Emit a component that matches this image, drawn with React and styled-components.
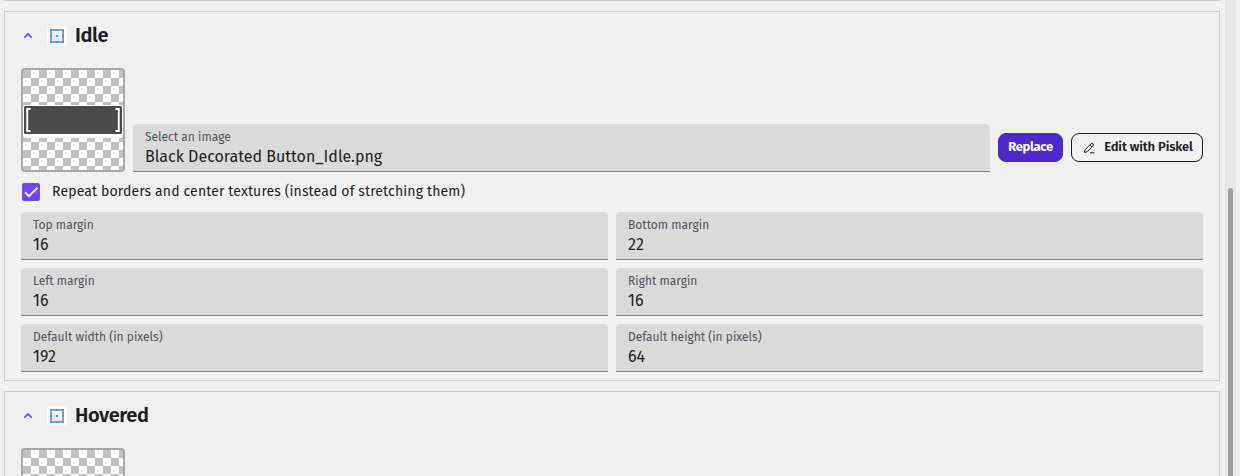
import React from "react";
import styled, { createGlobalStyle } from "styled-components";

const GlobalStyle = createGlobalStyle`
  * {
    box-sizing: border-box;
  }

  body {
    margin: 0;
    background: #f0f0f0;
    color: #1d1d26;
    font-family: "Fira Sans", "Noto Sans CJK SC", "Noto Sans", sans-serif;
    overflow: hidden;
  }
`;

const Page = styled.div`
  display: flex;
  height: 476px;
  overflow: hidden;
`;

const PanelList = styled.div`
  display: flex;
  flex-direction: column;
  flex: none;
  gap: 10px;
  width: 1220px;
  padding-left: 4px;
`;

const PanelEnd = styled.div`
  flex: none;
  height: 1px;
  background: #cccccc;
`;

const Panel = styled.section`
  flex: none;
  height: 370px;
  padding: 0 16px;
  border: 1px solid #cccccc;
`;

const PanelHeader = styled.header`
  display: flex;
  align-items: center;
  height: 48px;
`;

const Chevron = styled.svg`
  width: 10px;
  height: 8px;
  margin: 0 19px 1px 2px;
  fill: none;
  stroke: #7046ec;
  stroke-width: 1.7;
`;

const PatchIcon = styled.svg`
  width: 20px;
  height: 20px;
  margin: 0 8px 0 -5px;
`;

const PanelTitle = styled.h2`
  margin: 0 0 2px;
  font-size: 20px;
  line-height: 24px;
  font-weight: 600;
  letter-spacing: -0.4px;
`;

const ImageRow = styled.div`
  display: flex;
  align-items: flex-end;
  gap: 8px;
  margin-top: 8px;
`;

const Preview = styled.div`
  display: flex;
  flex: none;
  align-items: center;
  width: 104px;
  height: 104px;
  border: 2px solid #aaaaaa;
  border-radius: 4px;
  background: repeating-conic-gradient(#ffffff 0 25%, #c1c1c1 0 50%) 0 0 / 16px 16px;
`;

const ButtonTexture = styled.svg`
  width: 100px;
  height: 33px;
  margin-top: 3px;
`;

const Field = styled.label`
  display: block;
  flex: 1;
  height: 48px;
  padding: 5px 12px 0;
  border-bottom: 1px solid #7b7b7b;
  border-radius: 4px 4px 0 0;
  background: #dadada;
`;

const FieldLabel = styled.span`
  display: block;
  color: #51515d;
  font-size: 12px;
  line-height: 17px;
  white-space: nowrap;
`;

const FieldValue = styled.span`
  display: block;
  font-size: 16px;
  line-height: 22px;
  white-space: nowrap;
`;

const Button = styled.button`
  display: flex;
  flex: none;
  align-items: center;
  justify-content: center;
  width: ${({ $width }) => $width}px;
  height: 29px;
  margin-bottom: 10px;
  padding: ${({ $primary }) => ($primary ? "0 0 2px" : "0 0 2px 2px")};
  border: 1px solid ${({ $primary }) => ($primary ? "#4f28cd" : "#1d1d26")};
  border-radius: 8px;
  background: ${({ $primary }) => ($primary ? "#4f28cd" : "transparent")};
  color: ${({ $primary }) => ($primary ? "#ffffff" : "#1d1d26")};
  font-family: inherit;
  font-size: 13px;
  font-weight: ${({ $primary }) => ($primary ? 700 : 600)};
  line-height: 20px;
  letter-spacing: ${({ $primary }) => ($primary ? -0.3 : -0.13)}px;
  white-space: nowrap;
`;

const PencilIcon = styled.svg`
  flex: none;
  width: 12px;
  height: 12px;
  margin: 3px 9px 0 0;
  fill: none;
  stroke: currentColor;
`;

const CheckRow = styled.label`
  display: flex;
  align-items: center;
  gap: 12px;
  height: 40px;
  padding-left: 1px;
`;

const Checkbox = styled.span`
  display: flex;
  flex: none;
  width: 18px;
  height: 18px;
  border-radius: 2px;
  background: #7046ec;

  svg {
    width: 18px;
    height: 18px;
    fill: none;
    stroke: #f0f0f0;
    stroke-width: 2;
  }
`;

const CheckLabel = styled.span`
  font-size: 14px;
  line-height: 20px;
  letter-spacing: 0.14px;
`;

const FieldGrid = styled.div`
  display: grid;
  grid-template-columns: 1fr 1fr;
  gap: 8px;
`;

const ScrollTrack = styled.div`
  flex: none;
  width: 11px;
  height: 476px;
  margin-left: 5px;
  padding: 188px 3px 0;
  background: #e6e6e6;
`;

const ScrollThumb = styled.div`
  height: 310px;
  border-radius: 3px;
  background: #9e9e9e;
`;

const fields = [
  { label: "Top margin", value: "16" },
  { label: "Bottom margin", value: "22" },
  { label: "Left margin", value: "16" },
  { label: "Right margin", value: "16" },
  { label: "Default width (in pixels)", value: "192" },
  { label: "Default height (in pixels)", value: "64" },
];

const Header = ({ title }) => (
  <PanelHeader>
    <Chevron viewBox="0 0 10 8">
      <path d="M1.3 5.7 L5 2 L8.7 5.7" />
    </Chevron>
    <PatchIcon viewBox="0 0 20 20">
      <rect width="20" height="20" rx="3" fill="#fafafa" />
      <path d="M4 4 L16 16 H4 Z" fill="#e6e6e6" />
      <rect x="4" y="4" width="12" height="12" fill="none" stroke="#9497c3" strokeWidth="2" />
      <path
        d="M3 3h2v2H3z M9 3h2v2H9z M15 3h2v2h-2z M3 9h2v2H3z M15 9h2v2h-2z M3 15h2v2H3z M9 15h2v2H9z M15 15h2v2h-2z M9 9h2v2H9z"
        fill="#2ba6df"
      />
    </PatchIcon>
    <PanelTitle>{title}</PanelTitle>
  </PanelHeader>
);

const App = () => (
  <Page>
    <GlobalStyle />
    <PanelList>
      <PanelEnd />
      <Panel>
        <Header title="Idle" />
        <ImageRow>
          <Preview>
            <ButtonTexture viewBox="0 0 100 33">
              <rect width="100" height="33" rx="3" fill="#ffffff" />
              <rect x="1" y="1" width="98" height="28" rx="1.5" fill="#4a4a4a" />
              <path
                d="M7.5 4 H4.2 V26 H7.5 M92.5 4 H95.8 V26 H92.5"
                fill="none"
                stroke="#ffffff"
                strokeWidth="2"
              />
            </ButtonTexture>
          </Preview>
          <Field>
            <FieldLabel>Select an image</FieldLabel>
            <FieldValue>Black Decorated Button_Idle.png</FieldValue>
          </Field>
          <Button $primary $width={65}>Replace</Button>
          <Button $width={132}>
            <PencilIcon viewBox="0 0 12 12">
              <path d="M1.5 10.5 L2 7.8 L8 1.8 Q9 1 10 2 Q10.8 3 10 3.8 L4 9.8 Z M7 3 L9 5 M7 10.8 H11.5" />
            </PencilIcon>
            Edit with Piskel
          </Button>
        </ImageRow>
        <CheckRow>
          <Checkbox>
            <svg viewBox="0 0 18 18">
              <path d="M3 9.2 L7 13.2 L15.5 4.7" />
            </svg>
          </Checkbox>
          <CheckLabel>Repeat borders and center textures (instead of stretching them)</CheckLabel>
        </CheckRow>
        <FieldGrid>
          {fields.map(({ label, value }) => (
            <Field key={label}>
              <FieldLabel>{label}</FieldLabel>
              <FieldValue>{value}</FieldValue>
            </Field>
          ))}
        </FieldGrid>
      </Panel>
      <Panel>
        <Header title="Hovered" />
        <ImageRow>
          <Preview />
        </ImageRow>
      </Panel>
    </PanelList>
    <ScrollTrack>
      <ScrollThumb />
    </ScrollTrack>
  </Page>
);

export default App;
